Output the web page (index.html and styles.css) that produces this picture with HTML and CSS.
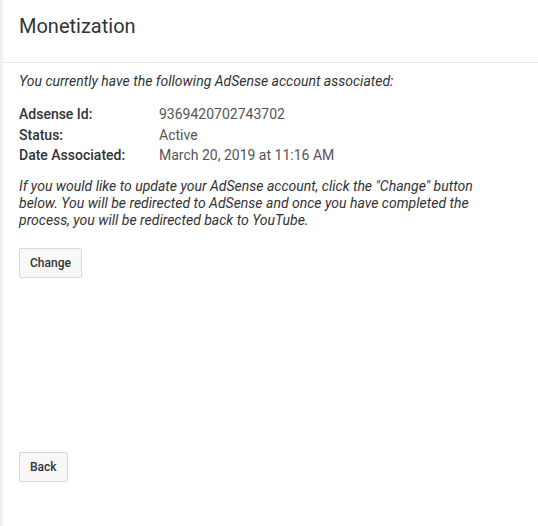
FILE: index.html
```html
<!DOCTYPE html>
<html lang="en">
  <head>
    <meta charset="UTF-8" />
    <meta name="viewport" content="width=device-width, initial-scale=1.0" />
    <title>Monetization</title>
    <link rel="stylesheet" href="styles.css">
  </head>

  <body>
    <div class="page">
      <div class="page-header">
        <h1 class="page-title">Monetization</h1>
      </div>

      <div class="page-content">
        <p class="intro">You currently have the following AdSense account associated:</p>

        <div class="account-info">
          <div class="info-row">
            <span class="info-label">Adsense Id:</span>
            <span class="info-value">9369420702743702</span>
          </div>
          <div class="info-row">
            <span class="info-label">Status:</span>
            <span class="info-value">Active</span>
          </div>
          <div class="info-row">
            <span class="info-label">Date Associated:</span>
            <span class="info-value">March 20, 2019 at 11:16 AM</span>
          </div>
        </div>

        <p class="note">If you would like to update your AdSense account, click the "Change" button below. You will be redirected to AdSense and once you have completed the process, you will be redirected back to YouTube.</p>

        <button type="button" class="plain-button">Change</button>

        <div class="back-row">
          <button type="button" class="plain-button">Back</button>
        </div>
      </div>
    </div>
  </body>
</html>
```

FILE: styles.css
```css
/* Page frame */
body {
  margin: 0;
  background-color: #fff;
  font-family: Roboto, "Liberation Sans", Arial, sans-serif;
  color: #333;
}

.page {
  min-height: 100vh;
  border-left: 3px solid #f1f1f1;
  box-sizing: border-box;
}

.page-header {
  height: 63px;
  padding: 14px 16px 0 16px;
  box-sizing: border-box;
  border-bottom: 1px solid #e6e6e6;
}

.page-title {
  margin: 0;
  font-size: 20px;
  font-weight: 400;
  line-height: 24px;
  color: #333;
}

/* Account details */
.page-content {
  padding: 8px 16px 0 16px;
  font-size: 14px;
}

.intro {
  margin: 0;
  line-height: 20px;
  font-style: italic;
  color: #333;
}

.account-info {
  margin-top: 13px;
}

.info-row {
  display: flex;
  line-height: 20.5px;
}

.info-label {
  width: 140px;
  font-weight: 500;
  color: #333;
}

.info-value {
  color: #555;
}

.note {
  width: 470px;
  margin: 12px 0 0 0;
  line-height: 17px;
  font-style: italic;
  color: #333;
}

/* Buttons */
.plain-button {
  margin-top: 19px;
  height: 30px;
  padding: 0 10px;
  background-color: #f8f8f8;
  border: 1px solid #d9d9d9;
  border-radius: 2px;
  font-family: inherit;
  font-size: 12px;
  font-weight: 500;
  color: #333;
  cursor: pointer;
}

.back-row {
  margin-top: 155px;
}
```
